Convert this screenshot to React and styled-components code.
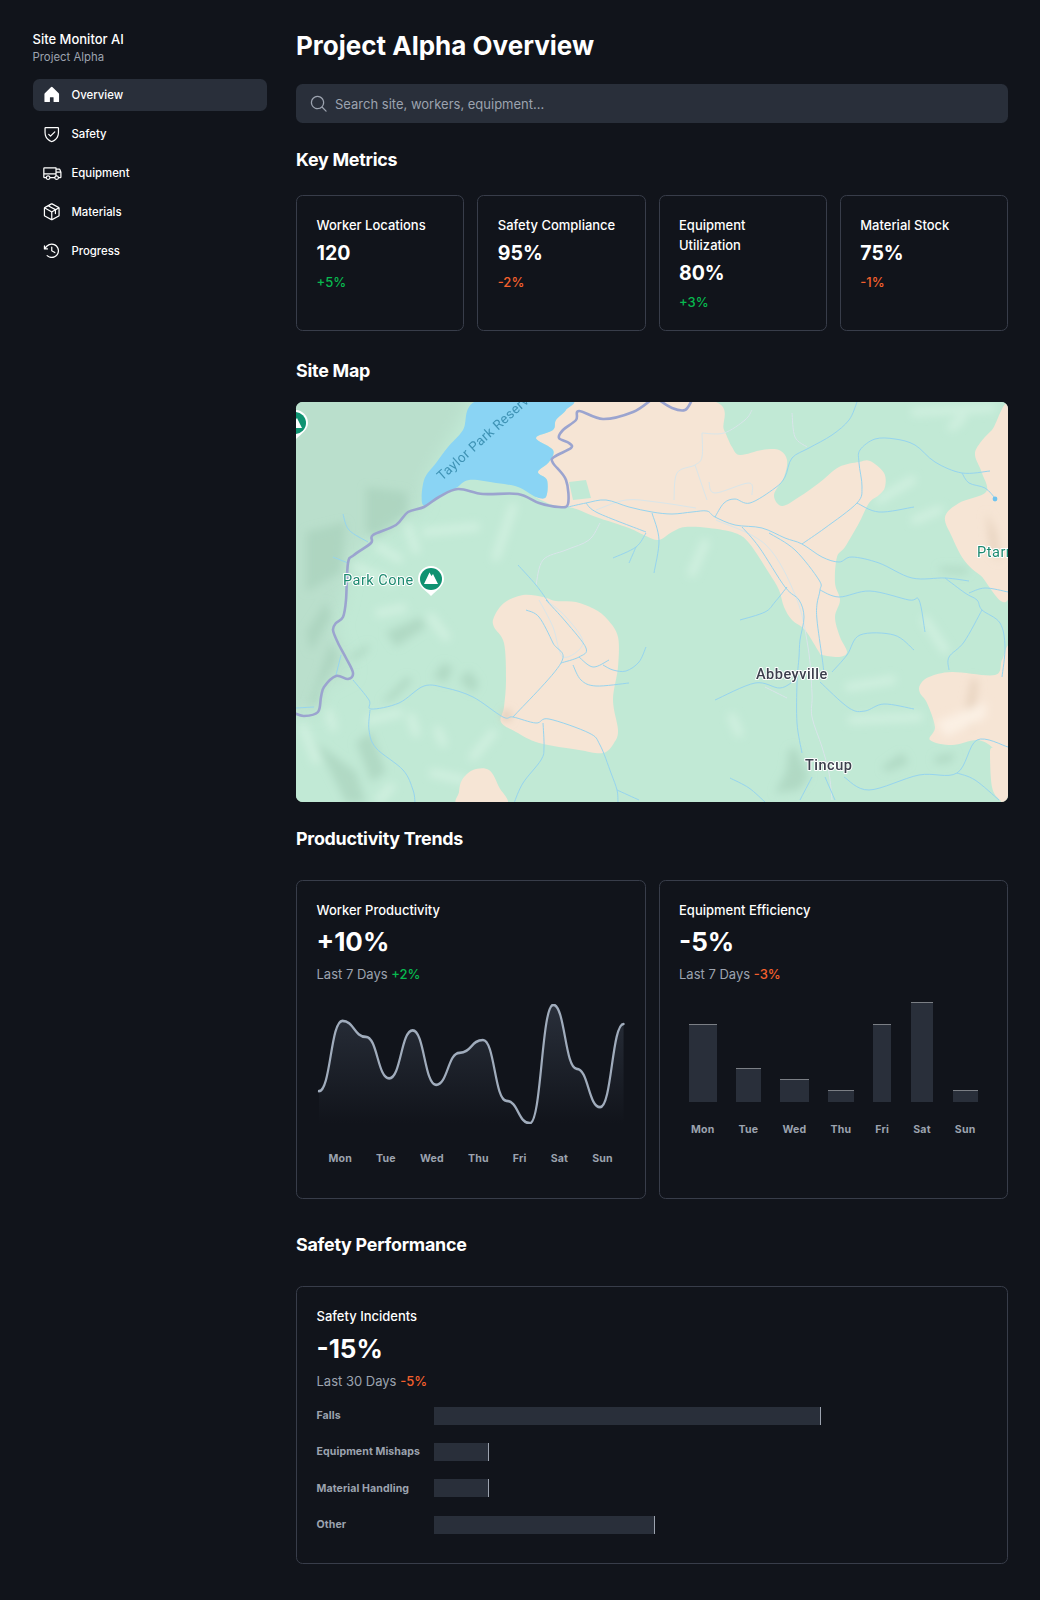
import React from 'react'
import styled, { createGlobalStyle } from 'styled-components'
import {
  PiHouseFill,
  PiShieldCheck,
  PiTruck,
  PiPackage,
  PiClockCounterClockwise,
  PiMagnifyingGlass,
} from 'react-icons/pi'

const GlobalStyle = createGlobalStyle`
  html, body {
    margin: 0;
    padding: 0;
    background: #11141b;
  }
  * {
    box-sizing: border-box;
  }
  body {
    font-family: Inter, "Noto Sans", sans-serif;
    color: #ffffff;
  }
`

const Page = styled.div`
  width: 1040px;
  height: 1600px;
  display: flex;
  gap: 29.5px;
  padding: 0 32px 0 32.5px;
  background: #11141b;
`

const Sidebar = styled.aside`
  width: 234px;
  flex-shrink: 0;
  padding-top: 30.25px;
`

const Brand = styled.div`
  font-size: 13px;
  line-height: 19.5px;
  font-weight: 500;
`

const Sub = styled.div`
  font-size: 11.375px;
  line-height: 16.25px;
  color: #9ca3af;
  margin-top: -0.6px;
`

const Nav = styled.nav`
  display: flex;
  flex-direction: column;
  gap: 6.5px;
  margin-top: 13.4px;
`

const NavItem = styled.div`
  display: flex;
  align-items: center;
  gap: 9.75px;
  height: 32.5px;
  padding: 0 9.75px;
  border-radius: 6.5px;
  font-size: 11.375px;
  font-weight: 500;
  background: ${props => (props.$active ? '#292f3a' : 'transparent')};
  svg {
    width: 19.5px;
    height: 19.5px;
    flex-shrink: 0;
  }
`

const Main = styled.main`
  width: 712px;
  padding-top: 29.75px;
`

const Title = styled.h1`
  margin: 0 0 21.75px;
  font-size: 26px;
  line-height: 32.5px;
  font-weight: 700;
`

const SearchBar = styled.div`
  height: 39px;
  display: flex;
  align-items: center;
  gap: 6.5px;
  padding-left: 13px;
  border-radius: 6.5px;
  background: #292f3a;
  color: #9ca3af;
  font-size: 13px;
  svg {
    width: 19.5px;
    height: 19.5px;
  }
`

const Heading = styled.h2`
  margin: ${props => props.$top}px 0 ${props => props.$bottom}px;
  font-size: 17.875px;
  line-height: 22.75px;
  font-weight: 700;
  letter-spacing: -0.25px;
`

const MetricGrid = styled.div`
  display: grid;
  grid-template-columns: repeat(4, 1fr);
  gap: 13px;
`

const Card = styled.div`
  padding: 19.5px;
  border: 0.8px solid #383d4a;
  border-radius: 6.5px;
  display: flex;
  flex-direction: column;
  gap: 6.5px;
`

const MetricCard = styled(Card)`
  padding-bottom: 18.3px;
`

const CardLabel = styled.div`
  font-size: 13px;
  line-height: 19.5px;
  font-weight: 500;
`

const MetricLabel = styled(CardLabel)`
  margin: 0.8px 0 -0.8px;
`

const MetricValue = styled.div`
  font-size: 19.5px;
  line-height: 24.4px;
  font-weight: 700;
`

const Delta = styled.span`
  font-size: 13px;
  line-height: 19.5px;
  font-weight: 500;
  color: ${props => (props.$up ? '#08b94f' : '#f4602d')};
`

const MetricDelta = styled(Delta)`
  margin-top: 0.8px;
`

const MapFrame = styled.div`
  height: 400px;
  border-radius: 6.5px;
  overflow: hidden;
  background: #c1e9d5;
  svg {
    display: block;
    filter: blur(0.35px);
  }
`

const ChartGrid = styled.div`
  display: grid;
  grid-template-columns: repeat(2, 1fr);
  gap: 13px;
`

const BigValue = styled.div`
  font-size: 26px;
  line-height: 32.5px;
  font-weight: 700;
`

const ChartCard = styled(Card)`
  height: ${props => props.$h}px;
  padding-top: ${props => (props.$tight ? '20.4px' : '19.5px')};
  ${BigValue} {
    margin-top: ${props => (props.$tight ? '-1px' : '0')};
  }
`

const Muted = styled.div`
  font-size: 13px;
  line-height: 19.5px;
  color: #9ca3af;
`

const LineWrap = styled.div`
  margin-top: 12.4px;
  svg {
    display: block;
  }
`

const DayRow = styled.div`
  display: flex;
  justify-content: space-around;
  margin-top: 28px;
`

const DayLabel = styled.span`
  font-size: 10.56px;
  line-height: 13px;
  font-weight: 700;
  letter-spacing: 0.2px;
  color: #9ca3af;
`

const BarGrid = styled.div`
  display: grid;
  grid-auto-flow: column;
  grid-template-rows: 1fr auto;
  align-items: end;
  justify-items: center;
  column-gap: 19.5px;
  row-gap: 20.7px;
  height: 137.8px;
  margin-top: 6.6px;
  padding: 0 9.75px;
`

const Bar = styled.div`
  width: 100%;
  height: ${props => props.$h}px;
  background: #292f3a;
  border-top: 1.6px solid #7b7f85;
`

const Incidents = styled.div`
  display: grid;
  grid-template-columns: auto 1fr;
  align-items: center;
  column-gap: 14px;
  row-gap: 18.5px;
  margin-top: 9px;
`

const Track = styled.div`
  height: 17.9px;
`

const Fill = styled.div`
  height: 100%;
  width: ${props => props.$pct}%;
  background: #292f3a;
  border-right: 1.6px solid #9ca3af;
`

const IncidentLabel = styled(DayLabel)`
  letter-spacing: 0.1px;
`

const NAV = [
  { label: 'Overview', Icon: PiHouseFill, active: true },
  { label: 'Safety', Icon: PiShieldCheck },
  { label: 'Equipment', Icon: PiTruck },
  { label: 'Materials', Icon: PiPackage },
  { label: 'Progress', Icon: PiClockCounterClockwise },
]

const METRICS = [
  { label: 'Worker Locations', value: '120', delta: '+5%', up: true },
  { label: 'Safety Compliance', value: '95%', delta: '-2%' },
  { label: 'Equipment Utilization', value: '80%', delta: '+3%', up: true },
  { label: 'Material Stock', value: '75%', delta: '-1%' },
]

const DAYS = ['Mon', 'Tue', 'Wed', 'Thu', 'Fri', 'Sat', 'Sun']
const BAR_HEIGHTS = [78, 34, 23, 12, 78, 100, 12]

const INCIDENTS = [
  { label: 'Falls', pct: 70 },
  { label: 'Equipment Mishaps', pct: 10 },
  { label: 'Material Handling', pct: 10 },
  { label: 'Other', pct: 40 },
]

const LINE =
  'M0 109C18.1538 109 18.1538 21 36.3077 21C54.4615 21 54.4615 41 72.6154 41C90.7692 41 90.7692 93 108.923 93C127.077 93 127.077 33 145.231 33C163.385 33 163.385 101 181.538 101C199.692 101 199.692 61 217.846 61C236 61 236 45 254.154 45C272.308 45 272.308 121 290.462 121C308.615 121 308.615 149 326.769 149C344.923 149 344.923 1 363.077 1C381.231 1 381.231 81 399.385 81C417.538 81 417.538 129 435.692 129C453.846 129 453.846 25 472 25'

// catmull-rom through the traced points, keeps the map data readable
const smooth = (pts, closed = false) => {
  const n = pts.length
  const at = i => (closed ? pts[(i + n) % n] : pts[Math.max(0, Math.min(n - 1, i))])
  let d = `M${pts[0][0]} ${pts[0][1]}`
  const last = closed ? n : n - 1
  for (let i = 0; i < last; i++) {
    const [p0, p1, p2, p3] = [at(i - 1), at(i), at(i + 1), at(i + 2)]
    const c1 = [p1[0] + (p2[0] - p0[0]) / 6, p1[1] + (p2[1] - p0[1]) / 6]
    const c2 = [p2[0] - (p3[0] - p1[0]) / 6, p2[1] - (p3[1] - p1[1]) / 6]
    d += `C${c1[0].toFixed(1)} ${c1[1].toFixed(1)} ${c2[0].toFixed(1)} ${c2[1].toFixed(1)} ${p2[0]} ${p2[1]}`
  }
  return closed ? d + 'Z' : d
}

const poly = pts => `M${pts.map(p => p.join(' ')).join('L')}Z`

const LAKE = [
  [183, -2], [167, 28], [152, 45], [140, 61], [128, 78], [127, 103], [143, 95], [160, 86], [173, 78], [200, 81],
  [222, 85], [240, 95], [250, 95], [251, 78], [242, 70], [253, 60], [257, 48], [240, 36], [257, 28], [260, 18],
  [270, 8], [272, -2],
]

const PEACH_MAIN = [
  [272, -2], [413, -2], [428, 28], [436, 45], [444, 53], [466, 48], [483, 48], [491, 58], [488, 75], [478, 93],
  [486, 104], [503, 95], [523, 81], [543, 65], [563, 60], [574, 59], [588, 71], [589, 85], [583, 93], [573, 101],
  [563, 121], [549, 145], [541, 155], [539, 181], [544, 198], [539, 215], [544, 235], [551, 250], [543, 255],
  [526, 253], [523, 250], [509, 228], [496, 218], [488, 205], [483, 188], [473, 171], [453, 141], [439, 131],
  [413, 126], [389, 125], [376, 130], [363, 138], [350, 134], [333, 126], [300, 115], [277, 106], [257, 103],
  [240, 95], [250, 95], [251, 78], [242, 70], [253, 60], [257, 48], [240, 36], [257, 28], [260, 18], [270, 8],
]

const PEACH_OVAL = [
  [198, 225], [198, 215], [208, 201], [227, 193], [247, 195], [260, 199], [280, 200], [300, 208], [312, 218],
  [322, 235], [322, 265], [317, 298], [322, 328], [318, 341], [307, 351], [283, 348], [243, 341], [220, 330],
  [205, 320], [208, 305], [210, 278], [208, 241],
]

const PEACH_SMALL = [[163, 390], [166, 378], [177, 368], [193, 368], [203, 385], [210, 403], [163, 403]]

const PEACH_RIGHT = [
  [714, 11], [696, 28], [684, 41], [679, 53], [686, 71], [690, 90], [663, 101], [649, 115], [656, 135], [668, 158],
  [684, 173], [714, 191],
]

const PEACH_LOW = [
  [624, 291], [624, 283], [633, 275], [656, 270], [699, 273], [706, 258], [714, 254], [714, 403], [704, 398],
  [696, 385], [694, 350], [696, 345], [681, 338], [656, 343], [634, 338], [639, 325], [631, 301],
]

const GREEN_PATCH = [[273, 80], [290, 78], [295, 96], [277, 98]]

const STREAMS = [
  [[272, 105], [290, 101], [310, 98], [333, 105], [356, 110], [376, 112], [396, 110], [411, 109], [419, 115], [439, 123], [466, 126], [489, 136], [506, 142], [526, 155], [543, 160], [556, 155], [583, 161], [616, 176], [649, 176], [673, 179]],
  [[649, 176], [669, 191], [681, 198], [686, 208], [704, 221], [709, 245], [706, 275]],
  [[686, 208], [668, 240], [653, 255], [653, 268]],
  [[673, 191], [689, 186], [712, 190]],
  [[419, 115], [428, 101], [439, 97], [454, 101], [479, 86], [489, 75], [496, 56], [513, 46], [536, 33], [553, 18], [561, 0]],
  [[506, 142], [529, 126], [561, 101], [566, 85], [563, 61], [564, 48], [579, 37], [599, 37], [619, 43], [639, 60], [666, 71], [694, 69]],
  [[666, 71], [673, 81], [689, 86], [699, 96]],
  [[561, 101], [583, 110], [618, 105]],
  [[446, 125], [463, 145], [489, 185], [503, 198], [508, 215], [504, 238], [503, 255], [501, 281], [501, 321], [506, 351]],
  [[473, 131], [499, 148], [523, 178], [524, 188], [521, 202], [521, 218], [526, 255], [528, 271]],
  [[524, 188], [543, 195], [574, 189], [613, 198], [623, 198], [629, 230]],
  [[491, 185], [479, 200], [469, 210], [444, 218]],
  [[536, 270], [551, 253], [564, 233], [598, 233], [618, 248]],
  [[524, 280], [553, 306], [569, 309], [588, 302], [618, 307]],
  [[419, 298], [459, 281], [484, 286], [499, 278]],
  [[548, 375], [573, 388], [623, 373], [661, 371], [681, 338], [712, 345]],
  [[661, 371], [679, 378], [703, 398]],
  [[434, 376], [453, 386], [469, 400]],
  [[516, 375], [504, 398]],
  [[529, 375], [539, 398]],
  [[356, 111], [363, 138], [358, 171]],
  [[350, 131], [340, 145], [317, 156]],
  [[340, 145], [333, 161]],
  [[290, 101], [302, 111], [350, 130]],
  [[222, 163], [240, 183], [253, 201]],
  [[230, 208], [243, 215], [257, 241], [265, 261], [217, 315]],
  [[250, 198], [270, 220], [290, 246], [283, 255], [265, 261]],
  [[283, 255], [297, 265], [313, 258]],
  [[307, 263], [317, 268], [330, 269], [343, 260], [350, 245]],
  [[277, 263], [285, 278], [300, 284], [333, 281]],
  [[57, 278], [73, 298], [75, 307], [103, 301], [128, 284], [150, 286], [177, 295], [207, 315], [217, 315], [240, 321], [253, 317], [293, 331], [304, 343], [315, 371], [321, 388], [322, 401]],
  [[321, 388], [343, 398]],
  [[247, 321], [248, 345], [245, 358], [227, 381], [218, 401]],
  [[74, 308], [73, 328], [80, 346], [107, 368], [117, 388], [119, 401]],
  [[45, 253], [40, 273]],
  [[47, 112], [53, 128], [72, 140]],
  [[37, 155], [52, 161]],
  [[0, 306], [18, 305]],
]

const PALE_ROADS = [
  [[406, 31], [406, 55], [399, 63], [381, 71], [378, 98]],
  [[406, 31], [428, 31], [449, 18], [456, 8]],
  [[399, 63], [411, 98]],
  [[413, 80], [419, 91], [453, 81], [456, 93]],
  [[496, 11], [499, 35], [511, 45]],
  [[243, 198], [257, 225], [267, 255], [287, 241], [270, 215], [250, 198]],
  [[300, 108], [330, 98], [360, 100], [400, 106]],
  [[420, 118], [470, 143], [500, 195], [512, 245], [516, 291], [516, 315], [526, 345], [533, 371], [536, 398]],
  [[469, 285], [491, 296]],
  [[304, 121], [293, 138], [270, 148], [247, 158], [240, 183]],
]

const ROAD = [
  [-2, 311], [8, 314], [22, 310], [25, 295], [28, 285], [40, 274], [52, 277], [57, 271], [50, 256], [42, 241], [37, 228],
  [40, 221], [47, 215], [50, 198], [52, 161], [58, 153], [75, 141], [77, 133], [100, 123], [112, 110], [128, 105],
  [143, 95], [162, 87], [187, 92], [222, 92], [243, 101], [263, 105], [272, 102], [270, 78], [257, 61], [258, 55],
  [275, 46], [273, 41], [263, 36], [267, 28], [280, 18], [283, 9], [307, 17], [337, 10], [355, -2],
]

const ROAD_TOP = [[363, -2], [376, 6], [389, 8], [396, -2]]

// terrain, drawn blurred under everything else
const SHADE_DARK = [
  [[70, 85], [110, 90], [112, 110], [80, 135], [70, 130]],
  [[12, 305], [35, 240], [42, 255], [25, 285], [22, 300]],
  [[85, 301], [110, 275], [117, 278], [97, 298]],
  [[137, 275], [147, 261], [157, 265], [150, 281]],
  [[163, 278], [173, 268], [183, 281], [177, 291]],
  [[53, 255], [73, 241], [72, 248], [60, 258]],
  [[586, 365], [606, 351], [613, 361], [590, 370]],
  [[638, 355], [659, 351], [655, 360], [640, 362]],
  [[493, 348], [499, 345], [513, 375], [503, 388], [479, 391], [490, 370]],
  [[643, 165], [673, 166], [670, 172], [645, 170]],
  [[20, 340], [60, 370], [70, 401], [50, 401]],
  [[10, 130], [50, 120], [45, 170], [10, 190]],
  [[90, 230], [125, 215], [130, 225], [100, 245]],
  [[60, 340], [75, 330], [90, 370], [75, 380]],
  [[10, 230], [30, 200], [35, 215], [15, 250]],
]

const SHADE_LIGHT = [
  [[112, 125], [120, 148]],
  [[200, 155], [217, 105]],
  [[83, 145], [103, 157]],
  [[115, 315], [120, 331]],
  [[142, 328], [147, 341]],
  [[177, 355], [197, 331]],
  [[33, 311], [37, 325]],
  [[7, 325], [20, 358]],
  [[137, 371], [167, 378]],
  [[83, 398], [95, 385]],
  [[83, 211], [107, 206]],
  [[73, 318], [103, 311]],
  [[619, 10], [696, 6]],
  [[656, 25], [666, 16]],
  [[583, 98], [616, 78]],
  [[619, 118], [643, 108]],
  [[553, 285], [596, 278]],
  [[556, 318], [623, 315]],
  [[629, 218], [649, 248]],
  [[436, 315], [443, 331]],
  [[396, 171], [409, 141]],
  [[60, 165], [95, 180]],
  [[130, 130], [180, 125]],
  [[150, 235], [135, 215]],
]

const Pin = ({ x, y }) => (
  <g transform={`translate(${x} ${y})`}>
    <path d="M-13 0A13 13 0 1 1 13 0C13 7 6 11 0 17C-6 11 -13 7 -13 0Z" fill="#fff" />
    <circle r="11" fill="#0f9271" />
    <path d="M-7 5L-1.5 -6.5L0.5 -3L2 -5L7 5Z" fill="#fff" />
  </g>
)

const MapLabel = styled.text`
  font-family: Roboto, sans-serif;
  font-size: 14.5px;
  font-weight: ${props => (props.$place ? 500 : 400)};
  letter-spacing: 0.5px;
  fill: ${props => (props.$place ? '#3b3f4c' : '#1d8a70')};
  stroke: #fff;
  stroke-width: 2px;
  stroke-linejoin: round;
  paint-order: stroke;
`

const WaterLabel = styled.text`
  font-family: Roboto, sans-serif;
  font-size: 13.5px;
  letter-spacing: 0.4px;
  fill: #3f93b5;
`

const SiteMap = () => (
  <svg width="712" height="400" viewBox="0 0 712 400">
    <defs>
      <filter id="soft" x="-20%" y="-20%" width="140%" height="140%">
        <feGaussianBlur stdDeviation="4" />
      </filter>
      <filter id="softer" x="-20%" y="-20%" width="140%" height="140%">
        <feGaussianBlur stdDeviation="8" />
      </filter>
    </defs>
    <rect width="712" height="400" fill="#c1e9d5" />
    <path
      d={poly([[-10, -10], [180, -10], [128, 78], [126, 104], [100, 122], [75, 135], [55, 155], [46, 200], [38, 225], [55, 270], [25, 285], [22, 310], [-10, 310]])}
      fill="#badfcc"
      filter="url(#softer)"
    />
    <g filter="url(#soft)">
      <g opacity="0.6">
        {SHADE_DARK.map((s, i) => (
          <path key={i} d={poly(s)} fill="#a5cfba" />
        ))}
      </g>
      <g opacity="0.55">
        {SHADE_LIGHT.map((s, i) => (
          <path key={i} d={smooth(s)} stroke="#dff6ea" strokeWidth="8" strokeLinecap="round" fill="none" />
        ))}
      </g>
    </g>
    <g fill="#f6e5d5">
      {[PEACH_MAIN, PEACH_OVAL, PEACH_SMALL, PEACH_RIGHT, PEACH_LOW].map((s, i) => (
        <path key={i} d={smooth(s, true)} />
      ))}
    </g>
    <g filter="url(#soft)">
      <path d={poly([[669, 311], [676, 275], [682, 280], [676, 330]])} fill="#e7d3bf" />
      <path d={poly([[640, 320], [690, 300], [690, 315], [650, 335]])} fill="#fbf0e4" />
      <path d={poly([[690, 110], [700, 130], [704, 160], [695, 150]])} fill="#e7d3bf" />
      <path d={poly([[207, 309], [214, 309], [214, 318], [207, 318]])} fill="#d8c2ac" />
    </g>
    <path d={smooth(LAKE, true)} fill="#8ad4f4" />
    <path d={poly(GREEN_PATCH)} fill="#c1e9d5" />
    <g fill="none" stroke="#d9e5ea" strokeWidth="1">
      {PALE_ROADS.map((s, i) => (
        <path key={i} d={smooth(s)} />
      ))}
    </g>
    <g fill="none" stroke="#96d4ef" strokeWidth="1" strokeLinejoin="round">
      {STREAMS.map((s, i) => (
        <path key={i} d={smooth(s)} />
      ))}
    </g>
    <circle cx="699" cy="97" r="2.4" fill="#6fc3ee" />
    <g fill="none" stroke="#9ba4cf" strokeWidth="2.6" strokeLinejoin="round">
      <path d={smooth(ROAD)} />
      <path d={smooth(ROAD_TOP)} />
    </g>
    <WaterLabel x="146" y="79" transform="rotate(-42 146 79)">Taylor Park Reservoir</WaterLabel>
    <MapLabel x="47" y="183">Park Cone</MapLabel>
    <MapLabel x="681" y="155">Ptarmigan</MapLabel>
    <MapLabel $place x="460" y="277">Abbeyville</MapLabel>
    <MapLabel $place x="509" y="368">Tincup</MapLabel>
    <Pin x={135} y={177} />
    <Pin x={-1} y={21} />
  </svg>
)

const LineChart = () => (
  <svg width="100%" height="120" viewBox="-3 0 478 150" fill="none" preserveAspectRatio="none">
    <defs>
      <linearGradient id="area" x1="236" y1="1" x2="236" y2="149" gradientUnits="userSpaceOnUse">
        <stop stopColor="#292f3a" />
        <stop offset="1" stopColor="#292f3a" stopOpacity="0" />
      </linearGradient>
    </defs>
    <path d={`${LINE}V149H0Z`} fill="url(#area)" />
    <path d={LINE} stroke="#a0acbc" strokeWidth="3.4" strokeLinecap="round" />
  </svg>
)

export default function App() {
  return (
    <>
      <GlobalStyle />
      <Page>
        <Sidebar>
          <Brand>Site Monitor AI</Brand>
          <Sub>Project Alpha</Sub>
          <Nav>
            {NAV.map(({ label, Icon, active }) => (
              <NavItem key={label} $active={active}>
                <Icon />
                {label}
              </NavItem>
            ))}
          </Nav>
        </Sidebar>
        <Main>
          <Title>Project Alpha Overview</Title>
          <SearchBar>
            <PiMagnifyingGlass />
            Search site, workers, equipment...
          </SearchBar>

          <Heading $top={25.6} $bottom={23.6}>Key Metrics</Heading>
          <MetricGrid>
            {METRICS.map(m => (
              <MetricCard key={m.label}>
                <MetricLabel>{m.label}</MetricLabel>
                <MetricValue>{m.value}</MetricValue>
                <MetricDelta $up={m.up}>{m.delta}</MetricDelta>
              </MetricCard>
            ))}
          </MetricGrid>

          <Heading $top={28.6} $bottom={19.6}>Site Map</Heading>
          <MapFrame>
            <SiteMap />
          </MapFrame>

          <Heading $top={25.6} $bottom={29}>Productivity Trends</Heading>
          <ChartGrid>
            <ChartCard $h={319.5} $tight>
              <CardLabel>Worker Productivity</CardLabel>
              <BigValue>+10%</BigValue>
              <Muted>
                Last 7 Days <Delta $up>+2%</Delta>
              </Muted>
              <LineWrap>
                <LineChart />
                <DayRow>
                  {DAYS.map(d => (
                    <DayLabel key={d}>{d}</DayLabel>
                  ))}
                </DayRow>
              </LineWrap>
            </ChartCard>
            <ChartCard $h={319.5} $tight>
              <CardLabel>Equipment Efficiency</CardLabel>
              <BigValue>-5%</BigValue>
              <Muted>
                Last 7 Days <Delta>-3%</Delta>
              </Muted>
              <BarGrid>
                {DAYS.map((d, i) => (
                  <React.Fragment key={d}>
                    <Bar $h={BAR_HEIGHTS[i]} />
                    <DayLabel>{d}</DayLabel>
                  </React.Fragment>
                ))}
              </BarGrid>
            </ChartCard>
          </ChartGrid>

          <Heading $top={34.6} $bottom={29.6}>Safety Performance</Heading>
          <ChartCard $h={278}>
            <CardLabel>Safety Incidents</CardLabel>
            <BigValue>-15%</BigValue>
            <Muted>
              Last 30 Days <Delta>-5%</Delta>
            </Muted>
            <Incidents>
              {INCIDENTS.map(row => (
                <React.Fragment key={row.label}>
                  <IncidentLabel>{row.label}</IncidentLabel>
                  <Track>
                    <Fill $pct={row.pct} />
                  </Track>
                </React.Fragment>
              ))}
            </Incidents>
          </ChartCard>
        </Main>
      </Page>
    </>
  )
}
